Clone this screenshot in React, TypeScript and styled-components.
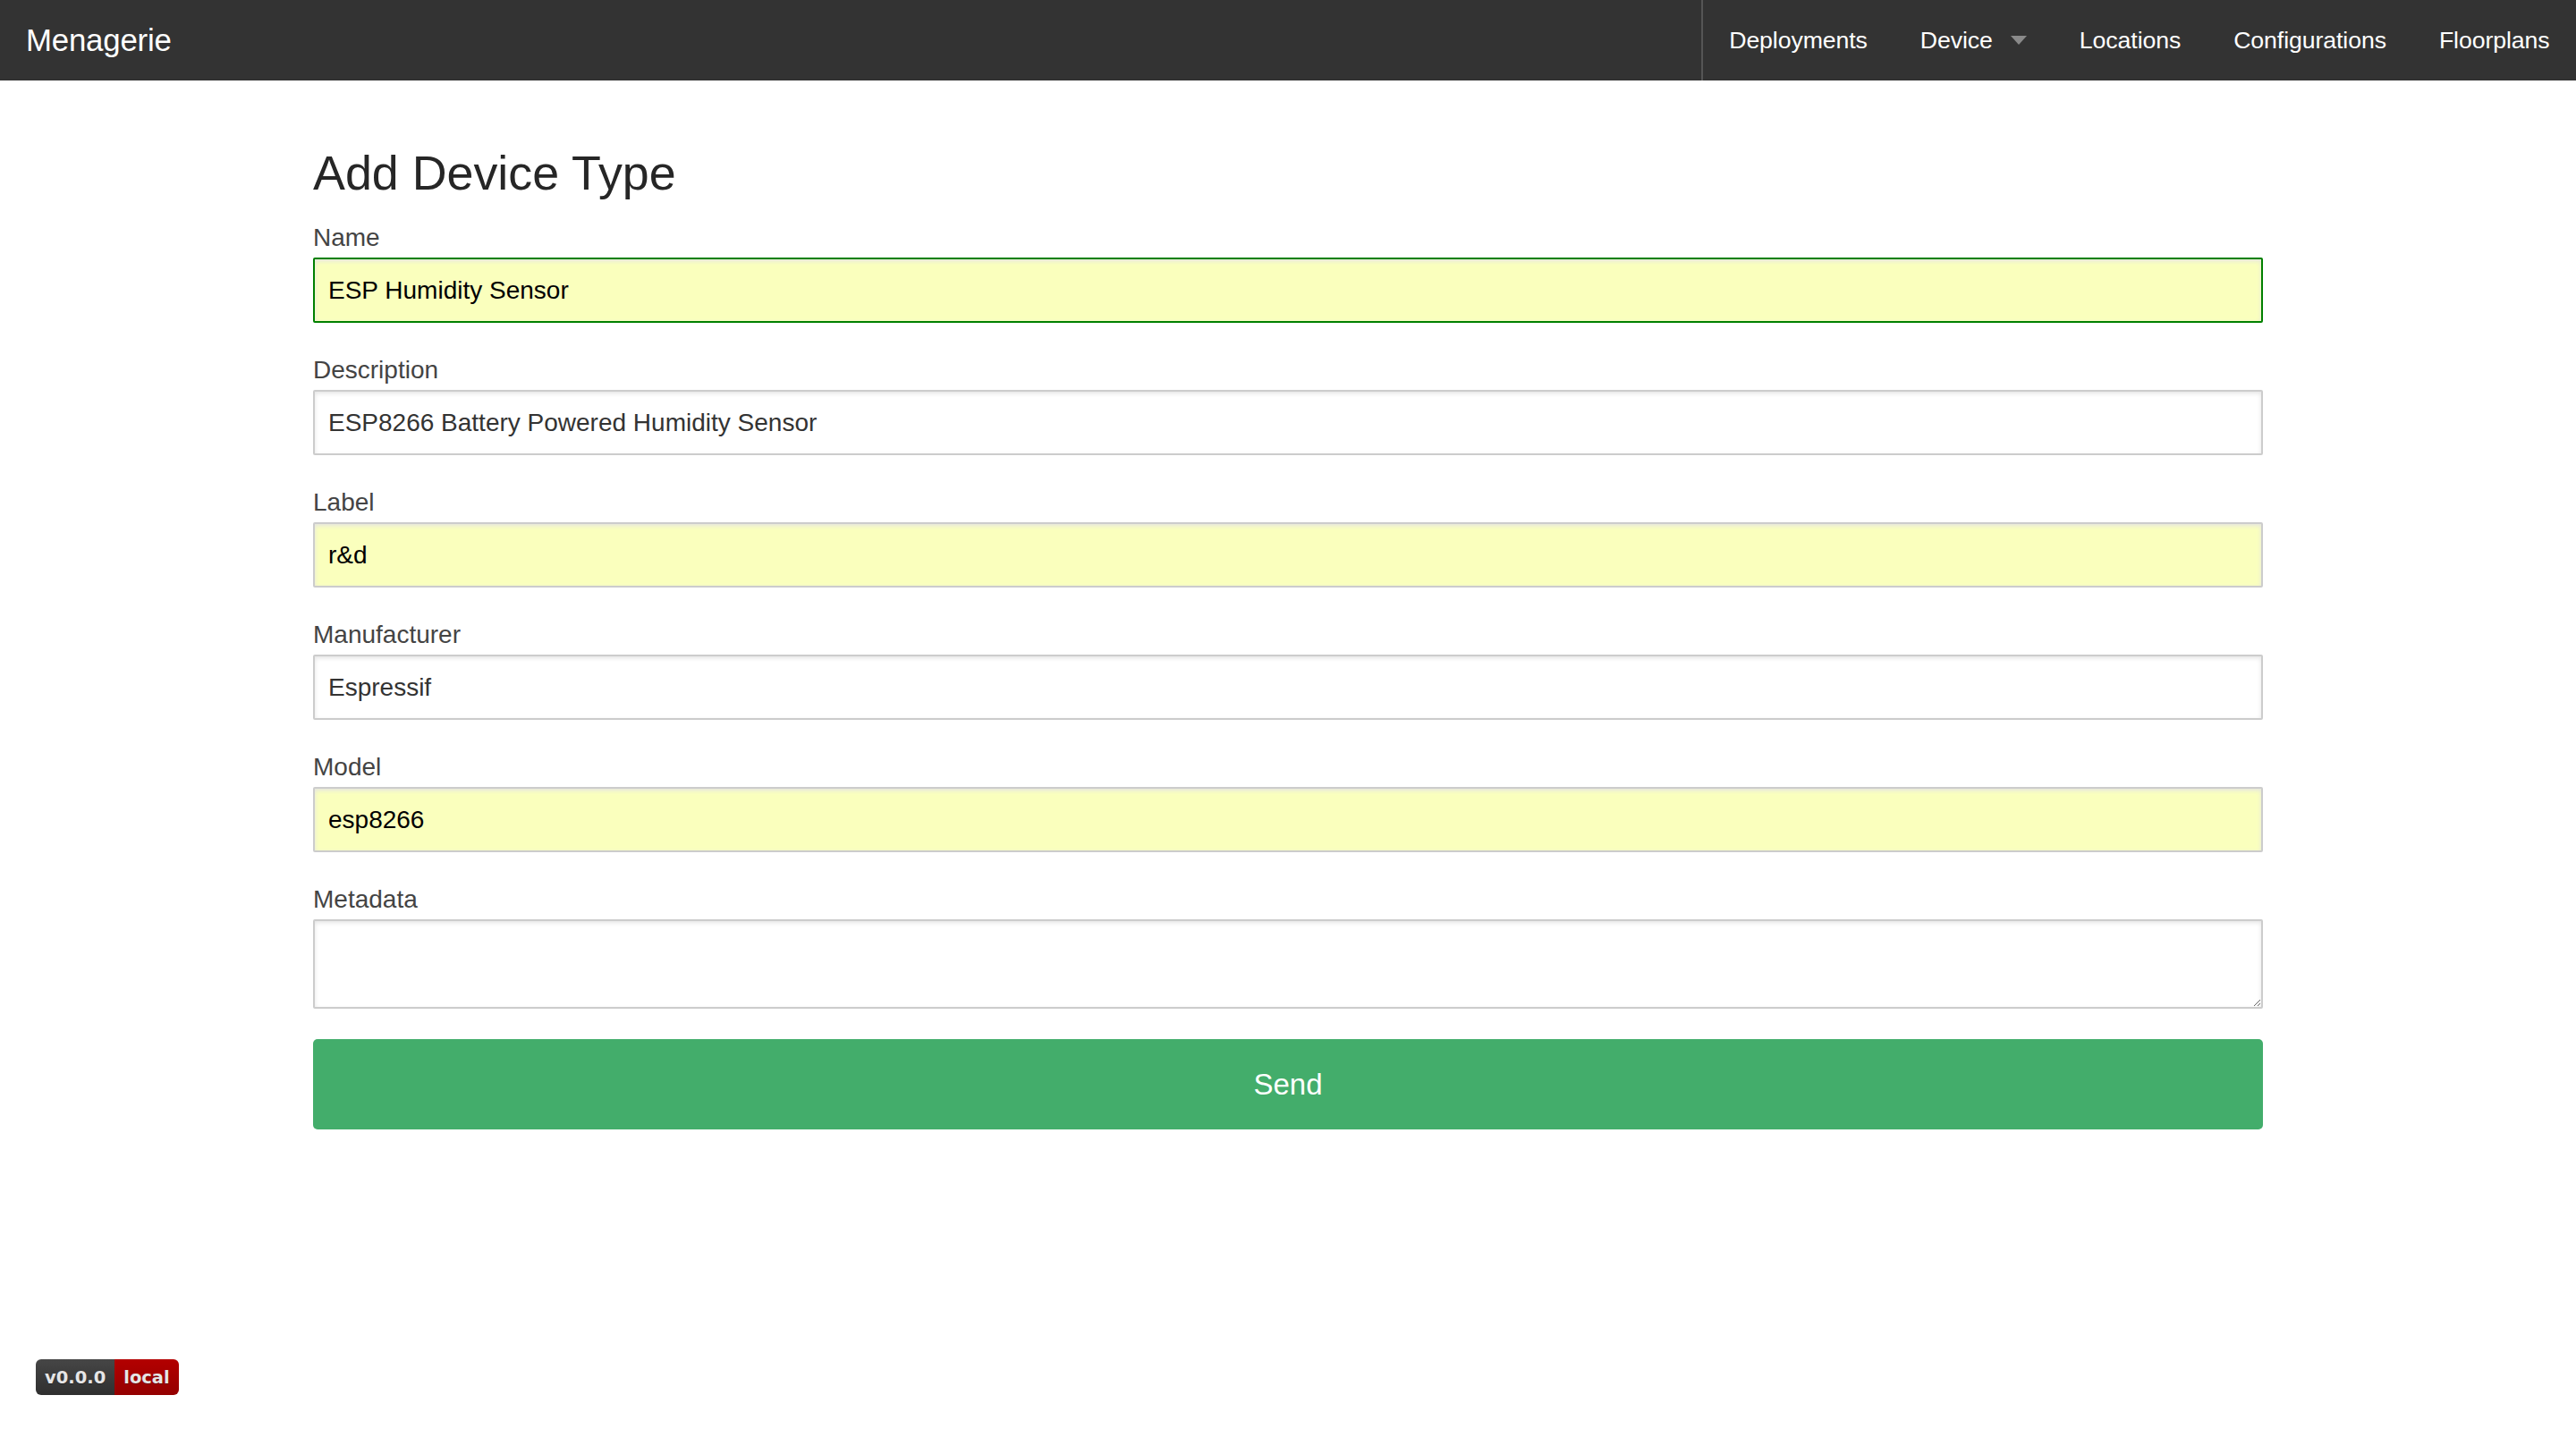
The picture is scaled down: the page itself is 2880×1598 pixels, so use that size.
import React from "react";
import styled, { createGlobalStyle } from "styled-components";

const GlobalStyle = createGlobalStyle`
  html, body {
    margin: 0;
    padding: 0;
    background: #ffffff;
    font-family: "Liberation Sans", Arial, Helvetica, sans-serif;
  }
  * { box-sizing: border-box; }
`;

const NavBar = styled.header`
  display: flex;
  align-items: stretch;
  justify-content: space-between;
  height: 90px;
  background: #333333;
`;

const Brand = styled.a`
  display: flex;
  align-items: center;
  padding-left: 29px;
  color: #ffffff;
  font-size: 34.8px;
  text-decoration: none;
  letter-spacing: -0.2px;
`;

const Menu = styled.nav`
  display: flex;
  align-items: stretch;
  border-left: 2px solid #555555;
`;

const MenuLink = styled.a`
  display: flex;
  align-items: center;
  gap: 20px;
  padding: 0 29.5px;
  color: #ffffff;
  font-size: 26.7px;
  text-decoration: none;
  letter-spacing: -0.1px;
`;

const Caret = styled.span`
  display: inline-block;
  width: 0;
  height: 0;
  border-left: 9.5px solid transparent;
  border-right: 9.5px solid transparent;
  border-top: 10px solid #8a8a8a;
`;

const Main = styled.main`
  width: 2180px;
  margin: 0 auto;
  padding-top: 71px;
`;

const Heading = styled.h2`
  margin: 0 0 25px;
  font-size: 53.8px;
  line-height: 64px;
  font-weight: normal;
  color: #262626;
`;

const Form = styled.form`
  display: flex;
  flex-direction: column;
`;

const Field = styled.div`
  display: flex;
  flex-direction: column;
  margin-bottom: 37px;
`;

const Label = styled.label`
  display: block;
  font-size: 28px;
  line-height: 32px;
  margin-bottom: 6px;
  color: #444444;
`;

const TextInput = styled.input<{ $autofill?: boolean; $focused?: boolean }>`
  display: block;
  width: 100%;
  height: 73px;
  margin: 0;
  padding: 0 15px;
  font-family: "Liberation Sans", Arial, Helvetica, sans-serif;
  font-size: 28px;
  color: ${(p) => (p.$autofill ? "#000000" : "#333333")};
  background: ${(p) => (p.$autofill ? "#faffbd" : "#ffffff")};
  border: 2px solid ${(p) => (p.$focused ? "#008000" : "#cccccc")};
  border-radius: 2px;
  box-shadow: inset 0 2px 5px #e4e4e4;
  outline: none;
`;

const TextArea = styled.textarea`
  display: block;
  width: 100%;
  height: 100px;
  margin: 0;
  padding: 10px 15px;
  font-family: "Liberation Sans", Arial, Helvetica, sans-serif;
  font-size: 28px;
  color: #333333;
  background: #ffffff;
  border: 2px solid #cccccc;
  border-radius: 2px;
  box-shadow: inset 0 2px 5px #e4e4e4;
  outline: none;
`;

const SendButton = styled.button`
  display: block;
  width: 100%;
  height: 101px;
  margin-top: -3px;
  border: none;
  border-radius: 5px;
  background: #43ad6b;
  color: #ffffff;
  font-family: "Liberation Sans", Arial, Helvetica, sans-serif;
  font-size: 33px;
  cursor: pointer;
`;

const Badge = styled.div`
  position: fixed;
  left: 40px;
  bottom: 38px;
  display: flex;
  height: 40px;
  border-radius: 6px;
  overflow: hidden;
`;

const BadgePart = styled.span<{ $tone: "dark" | "red" }>`
  display: flex;
  align-items: center;
  padding: 0 10px;
  font-family: "DejaVu Sans", Verdana, sans-serif;
  font-size: 19.5px;
  font-weight: bold;
  color: #e6e6e6;
  text-shadow: 0 1px 0 rgba(0, 0, 0, 0.35);
  background: ${(p) =>
    p.$tone === "dark"
      ? "linear-gradient(#464646, #2f2f2f)"
      : "linear-gradient(#b30000, #940000)"};
`;

type FieldDef = {
  label: string;
  value: string;
  autofill?: boolean;
  focused?: boolean;
};

const fields: FieldDef[] = [
  { label: "Name", value: "ESP Humidity Sensor", autofill: true, focused: true },
  { label: "Description", value: "ESP8266 Battery Powered Humidity Sensor" },
  { label: "Label", value: "r&d", autofill: true },
  { label: "Manufacturer", value: "Espressif" },
  { label: "Model", value: "esp8266", autofill: true },
];

const navItems = ["Deployments", "Device", "Locations", "Configurations", "Floorplans"];

export default function App() {
  return (
    <>
      <GlobalStyle />
      <NavBar>
        <Brand href="#">Menagerie</Brand>
        <Menu>
          {navItems.map((item) => (
            <MenuLink href="#" key={item}>
              {item}
              {item === "Device" && <Caret />}
            </MenuLink>
          ))}
        </Menu>
      </NavBar>
      <Main>
        <Heading>Add Device Type</Heading>
        <Form onSubmit={(e) => e.preventDefault()}>
          {fields.map((f) => (
            <Field key={f.label}>
              <Label htmlFor={f.label}>{f.label}</Label>
              <TextInput
                id={f.label}
                defaultValue={f.value}
                $autofill={f.autofill}
                $focused={f.focused}
              />
            </Field>
          ))}
          <Field>
            <Label htmlFor="metadata">Metadata</Label>
            <TextArea id="metadata" />
          </Field>
          <SendButton type="submit">Send</SendButton>
        </Form>
      </Main>
      <Badge>
        <BadgePart $tone="dark">v0.0.0</BadgePart>
        <BadgePart $tone="red">local</BadgePart>
      </Badge>
    </>
  );
}
